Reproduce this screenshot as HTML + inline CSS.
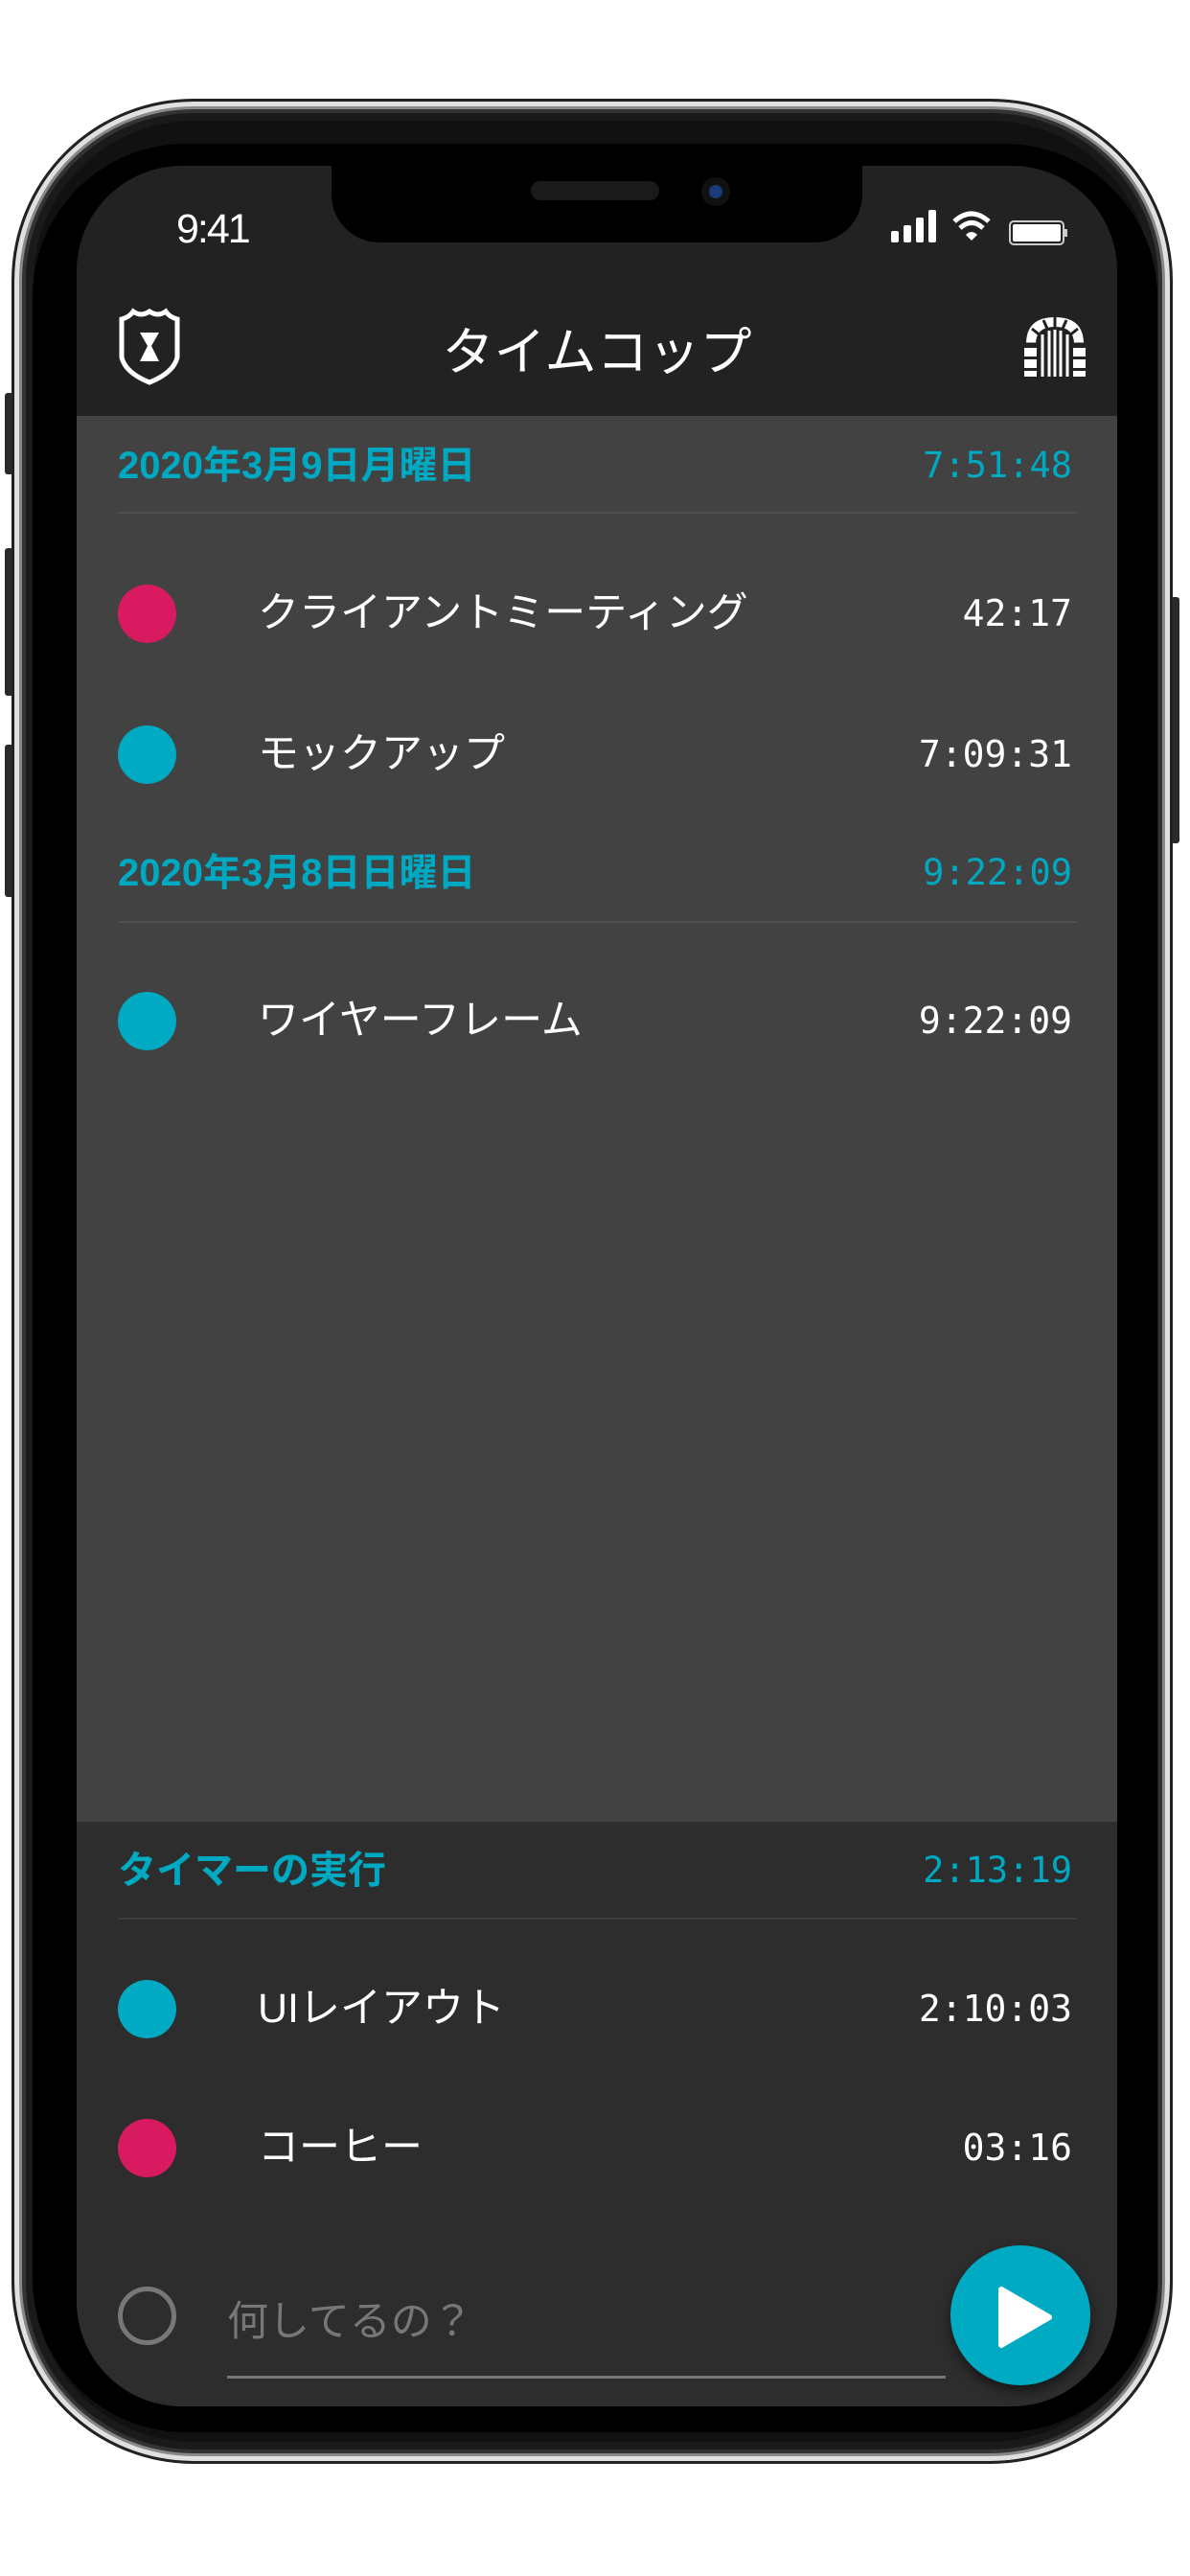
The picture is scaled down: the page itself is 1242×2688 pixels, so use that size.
<!DOCTYPE html>
<html><head><meta charset="utf-8">
<style>
*{margin:0;padding:0;box-sizing:border-box}
body{width:1242px;height:2688px;background:#fff;position:relative;overflow:hidden;font-family:"Liberation Sans","Noto Sans CJK JP",sans-serif}
.abs{position:absolute}
.phone{left:12px;top:103px;width:1212px;height:2468px;border-radius:190px;background:#111;border:3px solid #222;box-shadow:inset 0 0 0 5px #e0e0e0,inset 0 0 0 8px #888,inset 0 0 0 12px #333,inset 0 0 0 20px #1a1a1a}
.bezel{left:34px;top:150px;width:1174px;height:2388px;border-radius:160px;background:#000}
.screen{left:80px;top:173px;width:1086px;height:2338px;border-radius:110px;overflow:hidden;background:#222}
.btn{background:#2a2a2a;border-radius:3px}
.hdr{position:absolute;left:43px;right:47px;font-weight:bold;font-size:40px;line-height:50px;color:#00a9c2}
.hdr .t{position:absolute;right:0;top:0;font-family:"DejaVu Sans Mono","Liberation Mono",monospace;font-weight:normal;font-size:37px;line-height:50px}
.line{position:absolute;left:43px;right:42px;height:2px;background:#4e4e4e}
.row{position:absolute;left:43px;right:47px;height:60px}
.dot{position:absolute;left:0;top:0;width:61px;height:61px;border-radius:50%}
.row .n{position:absolute;left:146px;top:6px;font-size:43px;color:#fff;line-height:48px}
.row .t{position:absolute;right:0;top:8px;font-family:"DejaVu Sans Mono","Liberation Mono",monospace;font-size:38px;color:#fff;line-height:44px}
</style></head><body>
<div class="abs btn" style="left:5px;top:410px;width:9px;height:85px"></div>
<div class="abs btn" style="left:5px;top:572px;width:9px;height:154px"></div>
<div class="abs btn" style="left:5px;top:777px;width:9px;height:159px"></div>
<div class="abs btn" style="left:1222px;top:623px;width:9px;height:257px"></div>
<div class="abs phone"></div>
<div class="abs bezel"></div>
<div class="abs screen">
  <div class="abs" style="left:0;top:261px;width:1086px;height:1467px;background:#424242"></div>
  <div class="abs" style="left:0;top:1728px;width:1086px;height:620px;background:#2d2d2d"></div>
  <div class="abs" style="left:266px;top:-10px;width:554px;height:90px;background:#000;border-radius:0 0 50px 50px"></div>
  <div class="abs" style="left:474px;top:16px;width:134px;height:20px;background:#1a1a1a;border-radius:10px"></div>
  <div class="abs" style="left:652px;top:12px;width:30px;height:30px;background:#111;border-radius:50%"><div style="margin:8px;width:14px;height:14px;border-radius:50%;background:#1a3a7a"></div></div>
  <div class="abs" style="left:104px;top:42px;font-size:43px;color:#fff;letter-spacing:-2px">9:41</div>
  <svg class="abs" style="left:846px;top:44px" width="190" height="40" viewBox="0 0 190 40">
    <rect x="4" y="24" width="8" height="12" rx="2" fill="#fff"/><rect x="17" y="18" width="8" height="18" rx="2" fill="#fff"/><rect x="30" y="10" width="8" height="26" rx="2" fill="#fff"/><rect x="43" y="2" width="8" height="34" rx="2" fill="#fff"/>
    <path d="M70 14 Q88 -2 106 14" stroke="#fff" stroke-width="5" fill="none"/><path d="M76 21 Q88 10 100 21" stroke="#fff" stroke-width="5" fill="none"/><path d="M82 28 L88 34 L94 28 Q88 22 82 28Z" fill="#fff"/>
    <rect x="128" y="14" width="56" height="24" rx="4" fill="none" stroke="#ccc" stroke-width="2"/><rect x="131" y="17" width="50" height="18" rx="2" fill="#fff"/><rect x="185" y="22" width="3" height="8" fill="#ccc"/>
  </svg>
  <svg class="abs" style="left:41px;top:148px" width="70" height="82" viewBox="0 0 70 82">
    <path d="M6 12 Q14 10 18 4 Q26 10 35 4 Q44 10 52 4 Q56 10 64 12 L64 52 Q60 68 35 78 Q10 68 6 52Z" fill="none" stroke="#fff" stroke-width="5"/>
    <path d="M25 26 H45 L37 40 L45 56 H25 L33 40Z" fill="#fff"/>
  </svg>
  <div class="abs" style="left:0;width:1086px;top:150px;text-align:center;font-size:54px;color:#fff">タイムコップ</div>
  <svg class="abs" style="left:987px;top:156px" width="68" height="64" viewBox="0 0 68 64">
    <path d="M4 30 Q4 2 34 2 Q64 2 64 30" fill="#fff"/>
    <path d="M14 30 Q14 12 34 12 Q54 12 54 30" fill="#222"/>
    <path d="M4 30 L14 30 M54 30 L64 30 M10 14 L20 22 M58 14 L48 22 M34 2 L34 12 M22 5 L26 14 M46 5 L42 14" stroke="#222" stroke-width="3"/>
    <rect x="2" y="34" width="13" height="9" fill="#fff"/><rect x="2" y="46" width="13" height="9" fill="#fff"/><rect x="2" y="58" width="13" height="6" fill="#fff"/>
    <rect x="53" y="34" width="13" height="9" fill="#fff"/><rect x="53" y="46" width="13" height="9" fill="#fff"/><rect x="53" y="58" width="13" height="6" fill="#fff"/>
    <path d="M21 20 V64 M28 16 V64 M34 15 V64 M40 16 V64 M47 20 V64" stroke="#fff" stroke-width="3"/>
  </svg>
  <div class="hdr" style="top:288px">2020年3月9日月曜日<span class="t">7:51:48</span></div>
  <div class="line" style="top:361px"></div>
  <div class="row" style="top:437px"><div class="dot" style="background:#d81b60"></div><div class="n">クライアントミーティング</div><div class="t">42:17</div></div>
  <div class="row" style="top:584px"><div class="dot" style="background:#00aac3"></div><div class="n">モックアップ</div><div class="t">7:09:31</div></div>
  <div class="hdr" style="top:713px">2020年3月8日日曜日<span class="t">9:22:09</span></div>
  <div class="line" style="top:788px"></div>
  <div class="row" style="top:862px"><div class="dot" style="background:#00aac3"></div><div class="n">ワイヤーフレーム</div><div class="t">9:22:09</div></div>
  <div class="hdr" style="top:1754px">タイマーの実行<span class="t">2:13:19</span></div>
  <div class="line" style="top:1828px;background:#3c3c3c"></div>
  <div class="row" style="top:1893px"><div class="dot" style="background:#00aac3"></div><div class="n">UIレイアウト</div><div class="t">2:10:03</div></div>
  <div class="row" style="top:2038px"><div class="dot" style="background:#d81b60"></div><div class="n">コーヒー</div><div class="t">03:16</div></div>
  <div class="abs" style="left:43px;top:2213px;width:61px;height:61px;border-radius:50%;border:5px solid #777"></div>
  <div class="abs" style="left:157px;top:2215px;font-size:43px;color:#777">何してるの？</div>
  <div class="abs" style="left:157px;top:2306px;width:750px;height:3px;background:#777"></div>
  <div class="abs" style="left:912px;top:2170px;width:146px;height:146px;border-radius:50%;background:#00aac3;box-shadow:0 6px 12px rgba(0,0,0,.5)"></div>
  <svg class="abs" style="left:955px;top:2210px" width="70" height="70" viewBox="0 0 70 70"><path d="M10 6 L60 35 L10 64Z" fill="#fff" stroke="#fff" stroke-width="6" stroke-linejoin="round"/></svg>
</div>
</body></html>
